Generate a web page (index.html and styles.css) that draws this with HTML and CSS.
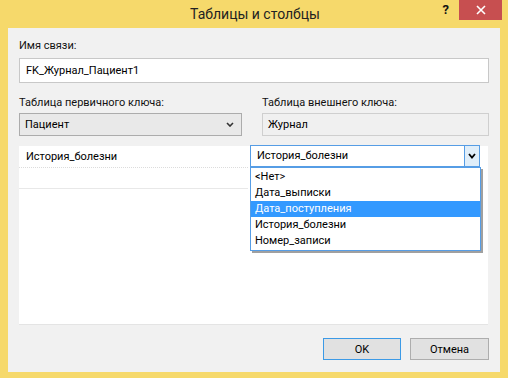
FILE: index.html
```html
<!DOCTYPE html>
<html lang="ru">
<head>
  <meta charset="UTF-8">
  <title>Таблицы и столбцы</title>
  <link rel="stylesheet" href="styles.css">
</head>
<body>
  <div class="window">
    <!-- Title bar -->
    <div class="titlebar">
      <span></span>
      <div class="title">Таблицы и столбцы</div>
      <div class="controls">
        <span class="help">?</span>
        <span class="close">
          <svg width="10" height="10" viewBox="0 0 10 10"><path d="M1 1 L9 9 M9 1 L1 9" stroke="#fff" stroke-width="1.6"/></svg>
        </span>
      </div>
    </div>

    <div class="client">
      <div class="label">Имя связи:</div>
      <div class="textbox">FK_Журнал_Пациент1</div>

      <!-- Key tables -->
      <div class="keys">
        <div class="key-col">
          <div class="label">Таблица первичного ключа:</div>
          <div class="select">
            <span>Пациент</span>
            <svg class="chevron" width="8" height="5" viewBox="0 0 8 5"><path d="M1 1 L4 4 L7 1" fill="none" stroke="#333" stroke-width="1.6"/></svg>
          </div>
        </div>
        <div class="key-col">
          <div class="label">Таблица внешнего ключа:</div>
          <div class="readonly">Журнал</div>
        </div>
      </div>

      <!-- Column mapping grid -->
      <div class="columns">
        <div class="row first">
          <div class="cell">История_болезни</div>
          <div class="cell combo-cell">
            <div class="combo">
              <span class="combo-text">История_болезни</span>
              <span class="combo-btn">
                <svg width="8" height="6" viewBox="0 0 8 6"><path d="M1 1 L4 4.5 L7 1" fill="none" stroke="#000" stroke-width="1.8"/></svg>
              </span>
            </div>
            <ul class="dropdown">
              <li>&lt;Нет&gt;</li>
              <li>Дата_выписки</li>
              <li class="selected">Дата_поступления</li>
              <li>История_болезни</li>
              <li>Номер_записи</li>
            </ul>
          </div>
        </div>
        <div class="row second">
          <div class="cell"></div>
        </div>
      </div>

      <div class="buttons">
        <button class="btn default">OK</button>
        <button class="btn">Отмена</button>
      </div>
    </div>
  </div>
</body>
</html>
```

FILE: styles.css
```css
body {
  margin: 0;
  font-family: Roboto, "Noto Sans", sans-serif;
  font-size: 11px;
  color: #000;
}
.window {
  width: 508px;
  height: 378px;
  box-sizing: border-box;
  background-color: #f6d96b;
  padding: 0 8px 6px 8px;
  display: flex;
  flex-direction: column;
}
.titlebar {
  height: 28px;
  flex: none;
  display: grid;
  grid-template-columns: 1fr auto 1fr;
  align-items: start;
  margin: 0 -2px 0 0;
}
.title {
  font-size: 14px;
  line-height: 28px;
  color: #222;
}
.controls {
  display: flex;
  justify-content: flex-end;
  align-items: center;
}
.help {
  font-weight: bold;
  font-size: 13px;
  margin-right: 10px;
  line-height: 20px;
  color: #111;
}
.close {
  width: 43px;
  height: 20px;
  background-color: #c74f50;
  display: flex;
  align-items: center;
  justify-content: center;
}
.client {
  flex: 1;
  background-color: #f1f1f1;
  padding: 10px 11px 0 11px;
  display: flex;
  flex-direction: column;
}
.label {
  line-height: 16px;
  height: 16px;
  color: #111;
}
.textbox {
  margin-top: 4px;
  height: 25px;
  box-sizing: border-box;
  border: 1px solid #c8c8c8;
  background-color: #fff;
  padding: 0 6px;
  line-height: 23px;
}
.keys {
  margin-top: 12px;
  display: grid;
  grid-template-columns: 223px 1fr;
  column-gap: 20px;
}
.select,
.readonly {
  margin-top: 2px;
  height: 23px;
  box-sizing: border-box;
  line-height: 21px;
  padding: 0 5px;
}
.select {
  border: 1px solid #acacac;
  background-color: #e9e9e9;
  display: flex;
  justify-content: space-between;
  align-items: center;
}
.chevron {
  margin-right: 2px;
}
.readonly {
  border: 1px solid #cfcfcf;
  background-color: #f0f0f0;
}
.columns {
  margin-top: 10px;
  height: 179px;
  width: 469px;
  background-color: #fff;
  border-bottom: 1px solid #e4e4e4;
  box-sizing: border-box;
}
.row {
  display: grid;
  grid-template-columns: 229px 1fr;
  height: 21px;
}
.row.first .cell:first-child {
  border-bottom: 1px dotted #dcdcdc;
}
.row.second {
  border-bottom: 1px solid #e8e8e8;
  width: 229px;
  grid-template-columns: 229px;
}
.cell {
  padding-left: 7px;
  line-height: 21px;
}
.combo-cell {
  position: relative;
  padding: 0;
}
.combo {
  position: absolute;
  left: 2px;
  top: -1px;
  width: 230px;
  height: 22px;
  box-sizing: border-box;
  border: 1px solid #569de5;
  background-color: #fff;
  display: flex;
}
.combo-text {
  flex: 1;
  padding-left: 6px;
  line-height: 20px;
}
.combo-btn {
  width: 14px;
  border-left: 1px solid #569de5;
  background-color: #e0eef9;
  display: flex;
  align-items: center;
  justify-content: center;
}
.dropdown {
  position: absolute;
  left: 2px;
  top: 21px;
  width: 231px;
  box-sizing: border-box;
  margin: 0;
  padding: 1px 0;
  list-style: none;
  background-color: #fff;
  border: 1px solid #569de5;
  box-shadow: 2px 2px 0 #a0a0a0;
  z-index: 2;
}
.dropdown li {
  height: 16px;
  line-height: 16px;
  padding-left: 4px;
}
.dropdown li.selected {
  background-color: #3399ff;
  color: #fff;
}
.buttons {
  margin-top: 13px;
  display: flex;
  justify-content: flex-end;
  gap: 9px;
}
.btn {
  font-family: inherit;
  font-size: 11px;
  width: 79px;
  height: 22px;
  padding: 0;
  background-color: #e1e1e1;
  border: 1px solid #adadad;
  color: #000;
}
.btn.default {
  width: 78px;
  border-color: #3c9ae6;
}
```
